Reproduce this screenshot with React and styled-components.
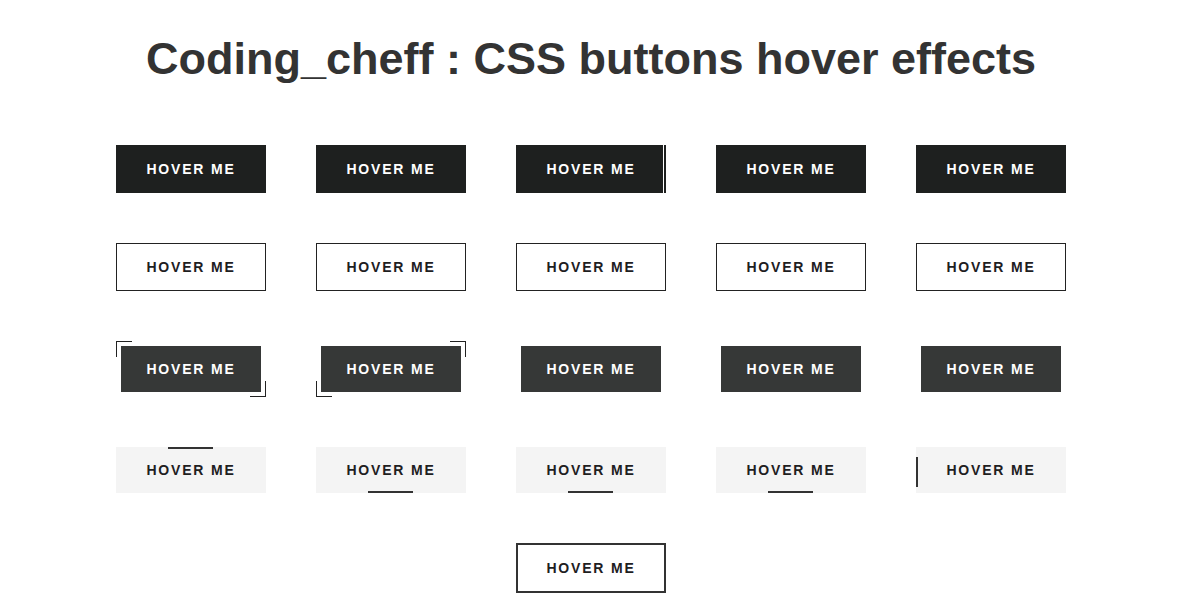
import React from "react";
import styled, { createGlobalStyle, css } from "styled-components";

const GlobalStyle = createGlobalStyle`
  html, body {
    margin: 0;
    padding: 0;
    background: #fff;
    font-family: "Liberation Sans", Arial, sans-serif;
  }
`;

const Page = styled.main`
  display: flex;
  flex-direction: column;
  align-items: center;
  padding: 33px 2px 0 0;
`;

const Title = styled.h1`
  margin: 0;
  font-size: 45px;
  font-weight: 700;
  color: #333;
  line-height: normal;
`;

const Rows = styled.div`
  display: flex;
  flex-direction: column;
  align-items: center;
  gap: 50px;
  margin-top: 60px;
`;

const Row = styled.div`
  display: grid;
  grid-template-columns: repeat(${(p) => p.cols}, 150px);
  column-gap: 50px;
`;

const base = css`
  position: relative;
  box-sizing: border-box;
  width: 150px;
  border: none;
  padding: 0;
  font-family: "Liberation Sans", Arial, sans-serif;
  font-size: 14px;
  font-weight: 700;
  letter-spacing: 1.8px;
  text-transform: uppercase;
  cursor: pointer;
`;

const DarkButton = styled.button`
  ${base};
  height: 48px;
  background: #1e201f;
  color: #fff;

  ${(p) =>
    p.$edge &&
    css`
      &::after {
        content: "";
        position: absolute;
        top: 0;
        right: 2px;
        width: 1px;
        height: 100%;
        background: #fff;
      }
    `}
`;

const OutlineButton = styled.button`
  ${base};
  height: 48px;
  background: #fff;
  color: #1e201f;
  border: 1px solid #222;
`;

const Framed = styled.div`
  position: relative;
  box-sizing: border-box;
  width: 150px;
  height: 56px;
  padding: 5px;
`;

const Corner = styled.span`
  position: absolute;
  width: 15px;
  height: 15px;
  border-color: #222;
  border-style: solid;
  border-width: 0;
  ${(p) => p.$pos === "tl" && "top: 0; left: 0; border-top-width: 1px; border-left-width: 1px;"}
  ${(p) => p.$pos === "tr" && "top: 0; right: 0; border-top-width: 1px; border-right-width: 1px;"}
  ${(p) => p.$pos === "bl" && "bottom: 0; left: 0; border-bottom-width: 1px; border-left-width: 1px;"}
  ${(p) => p.$pos === "br" && "bottom: 0; right: 0; border-bottom-width: 1px; border-right-width: 1px;"}
`;

const GreyDark = styled.button`
  ${base};
  width: 140px;
  height: 46px;
  background: #363837;
  color: #fff;
`;

const LightButton = styled.button`
  ${base};
  height: 46px;
  background: #f4f4f4;
  color: #1e201f;

  ${(p) =>
    p.$line === "top" &&
    css`
      &::after {
        content: "";
        position: absolute;
        top: 0;
        left: 52px;
        width: 45px;
        height: 2px;
        background: #333;
      }
    `}
  ${(p) =>
    p.$line === "bottom" &&
    css`
      &::after {
        content: "";
        position: absolute;
        bottom: 0;
        left: 52px;
        width: 45px;
        height: 2px;
        background: #333;
      }
    `}
  ${(p) =>
    p.$line === "left" &&
    css`
      &::after {
        content: "";
        position: absolute;
        top: 10px;
        left: 0;
        width: 2px;
        height: 30px;
        background: #333;
      }
    `}
`;

const ThickButton = styled.button`
  ${base};
  height: 50px;
  background: #fff;
  color: #1e201f;
  border: 2px solid #333;
`;

const label = "Hover me";

const framed = [["tl", "br"], ["tr", "bl"], [], [], []];
const light = ["top", "bottom", "bottom", "bottom", "left"];

export default function App() {
  return (
    <>
      <GlobalStyle />
      <Page>
        <Title>Coding_cheff : CSS buttons hover effects</Title>
        <Rows>
          <Row cols={5}>
            {[0, 1, 2, 3, 4].map((i) => (
              <DarkButton key={i} $edge={i === 2}>
                {label}
              </DarkButton>
            ))}
          </Row>
          <Row cols={5}>
            {[0, 1, 2, 3, 4].map((i) => (
              <OutlineButton key={i}>{label}</OutlineButton>
            ))}
          </Row>
          <Row cols={5}>
            {framed.map((corners, i) => (
              <Framed key={i}>
                {corners.map((c) => (
                  <Corner key={c} $pos={c} />
                ))}
                <GreyDark>{label}</GreyDark>
              </Framed>
            ))}
          </Row>
          <Row cols={5}>
            {light.map((line, i) => (
              <LightButton key={i} $line={line}>
                {label}
              </LightButton>
            ))}
          </Row>
          <Row cols={1}>
            <ThickButton>{label}</ThickButton>
          </Row>
        </Rows>
      </Page>
    </>
  );
}
